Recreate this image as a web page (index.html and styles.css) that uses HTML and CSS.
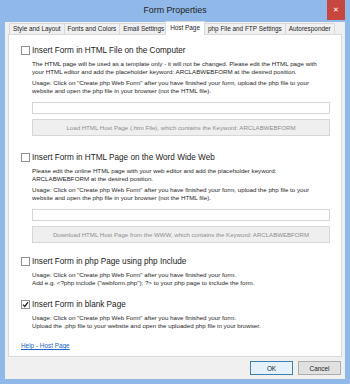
FILE: index.html
```html
<!DOCTYPE html>
<html lang="en">
<head>
    <meta charset="UTF-8">
    <meta name="viewport" content="width=device-width, initial-scale=1.0">
    <title>Form Properties</title>
    <link rel="stylesheet" href="styles.css">
</head>
<body>
    <div class="window">
        <!-- title bar -->
        <div class="title-bar">
            <span class="title">Form Properties</span>
            <button class="close-button">&#x2715;</button>
        </div>

        <div class="client">
            <div class="tabs">
                <div class="tab">Style and Layout</div>
                <div class="tab">Fonts and Colors</div>
                <div class="tab">Email Settings</div>
                <div class="tab active">Host Page</div>
                <div class="tab">php File and FTP Settings</div>
                <div class="tab">Autoresponder</div>
            </div>

            <div class="tab-panel">
                <!-- HTML file on the computer -->
                <section class="option option-file">
                    <label class="option-title"><span class="checkbox"></span>Insert Form in HTML File on the Computer</label>
                    <div class="option-body">
                        <p class="desc">The HTML page will be used as a template only - it will not be changed. Please edit the HTML page with<br>your HTML editor and add the placeholder keyword: ARCLABWEBFORM at the desired position.</p>
                        <p class="usage">Usage: Click on "Create php Web Form" after you have finished your form, upload the php file to your<br>website and open the php file in your browser (not the HTML file).</p>
                        <div class="path-input"></div>
                        <button class="load-button">Load HTML Host Page (.htm File), which contains the Keyword: ARCLABWEBFORM</button>
                    </div>
                </section>

                <!-- HTML page on the web -->
                <section class="option option-web">
                    <label class="option-title"><span class="checkbox"></span>Insert Form in HTML Page on the Word Wide Web</label>
                    <div class="option-body">
                        <p class="desc">Please edit the online HTML page with your web editor and add the placeholder keyword:<br>ARCLABWEBFORM at the desired position.</p>
                        <p class="usage">Usage: Click on "Create php Web Form" after you have finished your form, upload the php file to your<br>website and open the php file in your browser (not the HTML file).</p>
                        <div class="path-input"></div>
                        <button class="load-button">Download HTML Host Page from the WWW, which contains the Keyword: ARCLABWEBFORM</button>
                    </div>
                </section>

                <!-- php include -->
                <section class="option option-include">
                    <label class="option-title"><span class="checkbox"></span>Insert Form in php Page using php Include</label>
                    <div class="option-body">
                        <p class="usage">Usage: Click on "Create php Web Form" after you have finished your form.<br>Add e.g. &lt;?php include ("webform.php"); ?&gt; to your php page to include the form.</p>
                    </div>
                </section>

                <!-- blank page -->
                <section class="option option-blank">
                    <label class="option-title"><span class="checkbox checked"><svg width="7" height="7" viewBox="0 0 7 7"><path d="M1 3.6 L2.8 5.4 L6 1.2" fill="none" stroke="#222" stroke-width="1.3"/></svg></span>Insert Form in blank Page</label>
                    <div class="option-body">
                        <p class="usage">Usage: Click on "Create php Web Form" after you have finished your form.<br>Upload the .php file to your website and open the uploaded php file in your browser.</p>
                    </div>
                </section>

                <a class="help-link" href="#">Help - Host Page</a>
            </div>

            <div class="dialog-buttons">
                <button class="dialog-button default">OK</button>
                <button class="dialog-button">Cancel</button>
            </div>
        </div>
    </div>
</body>
</html>
```

FILE: styles.css
```css
:root {
    --frame: #90b8e9;
    --client: #f0f0f0;
    --border: #d9d9d9;
}

body {
    margin: 0;
    background: var(--frame);
    font-family: 'Liberation Sans', Arial, sans-serif;
    color: #1e1e1e;
}

.window {
    width: 350px;
    height: 384px;
    display: flex;
    flex-direction: column;
}

/* title bar */
.title-bar {
    height: 22px;
    display: grid;
    grid-template-columns: 1fr auto 1fr;
    align-items: start;
}

.title {
    grid-column: 2;
    font-size: 8.8px;
    line-height: 20px;
    color: #222;
}

.close-button {
    grid-column: 3;
    justify-self: end;
    width: 18px;
    height: 20px;
    margin-right: 5px;
    padding: 0;
    border: none;
    background: #c7473f;
    color: white;
    font-size: 7px;
    font-weight: bold;
    font-family: 'DejaVu Sans', sans-serif;
}

.client {
    flex: 1;
    margin: 0 5px 5px;
    padding: 0 3px;
    background: var(--client);
    display: flex;
    flex-direction: column;
}

/* tabs */
.tabs {
    height: 12px;
    display: flex;
    align-items: flex-end;
    padding-left: 1px;
}

.tab {
    height: 10px;
    padding: 0 3px;
    border: 1px solid var(--border);
    border-bottom: none;
    margin-right: -1px;
    font-size: 6.4px;
    line-height: 10px;
    white-space: nowrap;
}

.tab.active {
    height: 13px;
    margin: 0 -1px -1px -2px;
    padding: 0 4px;
    background: white;
    line-height: 11px;
    position: relative;
    z-index: 1;
}

.tab.active + .tab {
    margin-left: 0;
}

.tab-panel {
    flex: 1;
    background: white;
    border: 1px solid var(--border);
    padding: 9px 11px 0 12px;
}

/* options */
.option-title {
    height: 12px;
    display: flex;
    align-items: center;
    gap: 2px;
    font-size: 8.2px;
    color: #1a1a1a;
}

.checkbox {
    width: 7px;
    height: 7px;
    border: 1px solid #909090;
    background: white;
    display: flex;
    align-items: center;
    justify-content: center;
}

.checkbox svg {
    display: block;
}

.option-body {
    margin-left: 11px;
}

.option-body p {
    margin: 3px 0 0;
    font-size: 6.2px;
    line-height: 8px;
    white-space: nowrap;
}

.option-body .desc {
    margin-top: 4px;
}

.option-body .desc + .usage {
    margin-top: 3px;
}

.option-web {
    margin-top: 15px;
}

.option-include {
    margin-top: 12px;
}

.option-blank {
    margin-top: 11px;
}

.option-include .usage,
.option-blank .usage {
    margin-top: 4px;
}

.path-input {
    height: 10px;
    margin-top: 7px;
    border: 1px solid #d5d5d5;
    background: white;
}

.load-button {
    display: block;
    width: 100%;
    height: 17px;
    margin-top: 5px;
    padding: 0;
    border: 1px solid #d6d6d6;
    background: #efefef;
    color: #8e8e8e;
    font-family: inherit;
    font-size: 6.1px;
}

.help-link {
    display: inline-block;
    margin-top: 11px;
    font-size: 6.4px;
    line-height: 10px;
    color: #1a66c8;
}

/* OK / Cancel */
.dialog-buttons {
    display: flex;
    justify-content: flex-end;
    gap: 5px;
    padding: 4px 1px 4px 0;
}

.dialog-button {
    width: 43px;
    height: 14px;
    padding: 0;
    border: 1px solid #adadad;
    background: #e1e1e1;
    font-family: inherit;
    font-size: 6.4px;
    color: #1e1e1e;
}

.dialog-button.default {
    border-color: #3c7fb1;
    background: #e5f1fb;
}
```
